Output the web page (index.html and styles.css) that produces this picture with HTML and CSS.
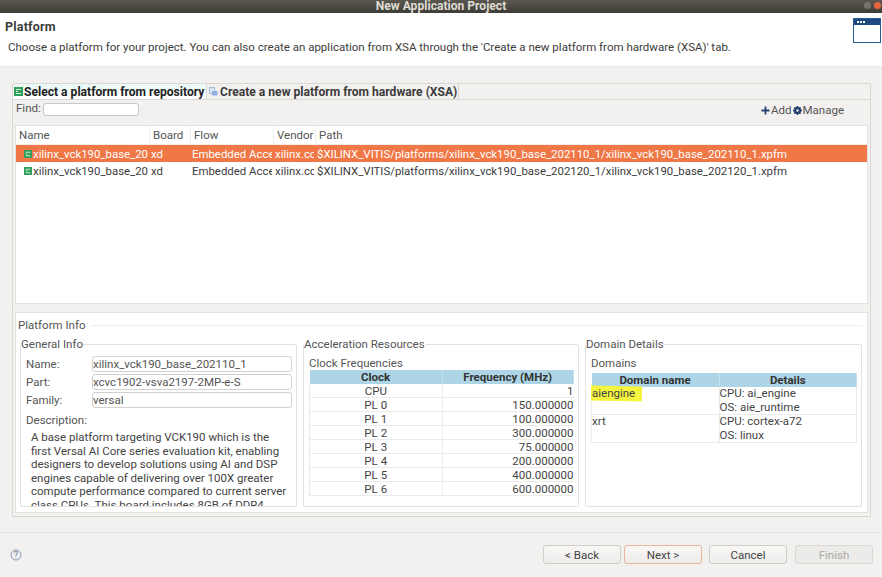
FILE: index.html
```html
<!DOCTYPE html>
<html lang="en">

<head>
    <meta charset="UTF-8">
    <title>New Application Project</title>
    <link rel="stylesheet" href="styles.css">
</head>

<body>
    <div class="titlebar">
        <span class="title">New Application Project</span>
        <span class="win-btns"><i class="win-max"></i><i class="win-close"></i></span>
    </div>

    <div class="banner">
        <div>
            <div class="banner-head">Platform</div>
            <div class="banner-text">Choose a platform for your project. You can also create an application from XSA through the 'Create a new platform from hardware (XSA)' tab.</div>
        </div>
        <div class="banner-icon"><i></i></div>
    </div>

    <div class="main">
        <div class="folder">
            <div class="tabs">
                <div class="tab active">
                    <svg class="chip" viewBox="0 0 9 9"><rect width="9" height="9" fill="#2f9e58"/><path d="M2 2.500h5M2 4.500h2M2 6.500h5" stroke="#d8f3e0" stroke-width="1"/></svg>
                    Select a platform from repository
                </div>
                <div class="tab">
                    <svg class="chip" viewBox="0 0 9 9"><rect x="0.500" y="0.500" width="5" height="6" fill="#dfe8f6" stroke="#a9bcdc"/><rect x="3" y="4" width="5.500" height="4.500" fill="#8fb0e0"/></svg>
                    Create a new platform from hardware (XSA)
                </div>
            </div>

            <div class="toolbar">
                <div class="find">
                    <label>Find:</label>
                    <input class="find-input" type="text">
                </div>
                <div class="actions">
                    <span class="action"><svg class="act-icon" viewBox="0 0 10 10"><path d="M5 0.500v9M0.500 5h9" stroke="#27406f" stroke-width="2"/></svg>Add</span>
                    <span class="action"><svg class="act-icon" viewBox="0 0 10 10"><circle cx="5" cy="5" r="3" fill="none" stroke="#27406f" stroke-width="2.200"/><path d="M5 0v10M0 5h10M1.500 1.500l7 7M8.500 1.500l-7 7" stroke="#27406f" stroke-width="1.400"/><circle cx="5" cy="5" r="1.300" fill="#f2f1f0"/></svg>Manage</span>
                </div>
            </div>

            <div class="repo">
                <table class="repo-table">
                    <colgroup>
                        <col class="c-name"><col class="c-board"><col class="c-flow"><col class="c-vendor"><col>
                    </colgroup>
                    <thead>
                        <tr><th>Name</th><th>Board</th><th>Flow</th><th>Vendor</th><th>Path</th></tr>
                    </thead>
                    <tbody>
                        <tr class="selected">
                            <td class="name-cell"><svg class="chip" viewBox="0 0 9 9"><rect width="9" height="9" fill="#2f9e58"/><path d="M2 2.500h5M2 4.500h2M2 6.500h5" stroke="#d8f3e0" stroke-width="1"/></svg>xilinx_vck190_base_20</td>
                            <td>xd</td>
                            <td>Embedded Acce</td>
                            <td>xilinx.co</td>
                            <td>$XILINX_VITIS/platforms/xilinx_vck190_base_202110_1/xilinx_vck190_base_202110_1.xpfm</td>
                        </tr>
                        <tr>
                            <td class="name-cell"><svg class="chip" viewBox="0 0 9 9"><rect width="9" height="9" fill="#2f9e58"/><path d="M2 2.500h5M2 4.500h2M2 6.500h5" stroke="#d8f3e0" stroke-width="1"/></svg>xilinx_vck190_base_20</td>
                            <td>xd</td>
                            <td>Embedded Acce</td>
                            <td>xilinx.co</td>
                            <td>$XILINX_VITIS/platforms/xilinx_vck190_base_202120_1/xilinx_vck190_base_202120_1.xpfm</td>
                        </tr>
                    </tbody>
                </table>
            </div>

            <div class="info">
                <div class="info-head"><span>Platform Info</span><i></i></div>
                <div class="info-cols">
                    <fieldset class="group">
                        <legend>General Info</legend>
                        <div class="form-row"><label>Name:</label><div class="field">xilinx_vck190_base_202110_1</div></div>
                        <div class="form-row"><label>Part:</label><div class="field">xcvc1902-vsva2197-2MP-e-S</div></div>
                        <div class="form-row"><label>Family:</label><div class="field">versal</div></div>
                        <div class="desc-label">Description:</div>
                        <div class="desc">A base platform targeting VCK190 which is the first Versal AI Core series evaluation kit, enabling designers to develop solutions using AI and DSP engines capable of delivering over 100X greater compute performance compared to current server class CPUs. This board includes 8GB of DDR4</div>
                    </fieldset>

                    <fieldset class="group">
                        <legend>Acceleration Resources</legend>
                        <div class="sub-title">Clock Frequencies</div>
                        <table class="data clocks">
                            <thead><tr><th>Clock</th><th>Frequency (MHz)</th></tr></thead>
                            <tbody>
                                <tr><td>CPU</td><td>1</td></tr>
                                <tr><td>PL 0</td><td>150.000000</td></tr>
                                <tr><td>PL 1</td><td>100.000000</td></tr>
                                <tr><td>PL 2</td><td>300.000000</td></tr>
                                <tr><td>PL 3</td><td>75.000000</td></tr>
                                <tr><td>PL 4</td><td>200.000000</td></tr>
                                <tr><td>PL 5</td><td>400.000000</td></tr>
                                <tr><td>PL 6</td><td>600.000000</td></tr>
                            </tbody>
                        </table>
                    </fieldset>

                    <fieldset class="group">
                        <legend>Domain Details</legend>
                        <div class="sub-title">Domains</div>
                        <table class="data domains">
                            <thead><tr><th>Domain name</th><th>Details</th></tr></thead>
                            <tbody>
                                <tr><td><span class="marked">aiengine</span></td><td>CPU: ai_engine<br>OS: aie_runtime</td></tr>
                                <tr><td>xrt</td><td>CPU: cortex-a72<br>OS: linux</td></tr>
                            </tbody>
                        </table>
                    </fieldset>
                </div>
            </div>
        </div>
    </div>

    <div class="footer">
        <svg class="help" viewBox="0 0 12 12"><circle cx="6" cy="6" r="5" fill="#eef0f6" stroke="#8b94a8"/><text x="6" y="9" text-anchor="middle">?</text></svg>
        <div class="buttons">
            <button class="btn">&lt; Back</button>
            <button class="btn default">Next &gt;</button>
            <button class="btn gap">Cancel</button>
            <button class="btn gap last" disabled>Finish</button>
        </div>
    </div>
</body>

</html>
```

FILE: styles.css
```css
html, body {
    margin: 0;
    padding: 0;
}

body {
    width: 882px;
    height: 577px;
    overflow: hidden;
    background: #f2f1f0;
    font-family: Roboto, "Noto Sans", sans-serif;
    font-size: 11.500px;
    color: #3c3c3c;
}

.titlebar {
    height: 13px;
    background: linear-gradient(#5a5750, #3f3d38);
    display: flex;
    justify-content: center;
    align-items: center;
    position: relative;
}

.title {
    color: #dfdbd2;
    font-weight: 700;
    font-size: 12.100px;
    line-height: 13px;
}

.win-btns {
    position: absolute;
    right: 1px;
    top: 2px;
    display: flex;
    gap: 3px;
}

.win-btns i {
    width: 7px;
    height: 7px;
    border-radius: 50%;
}

.win-max {
    background: #77746d;
}

.win-close {
    background: #e9643a;
}

.banner {
    height: 53px;
    background: #fff;
    border-bottom: 1px solid #e9e8e6;
    display: flex;
    justify-content: space-between;
}

.banner-head {
    font-weight: 700;
    font-size: 12.500px;
    letter-spacing: 0.200px;
    line-height: 14px;
    margin: 7px 0 0 5px;
}

.banner-text {
    margin: 5px 0 0 8px;
    font-size: 11.530px;
    line-height: 16px;
}

.banner-icon {
    width: 26px;
    height: 23px;
    margin: 5px 1px 0 0;
    border: 1px solid #2b5a94;
    background: #fff;
}

.banner-icon i {
    display: block;
    height: 6px;
    background: #1d4a80;
    position: relative;
}

.banner-icon i::before {
    content: "";
    position: absolute;
    left: 3px;
    top: 2px;
    width: 2px;
    height: 2px;
    background: #fff;
    box-shadow: 3px 0 #fff, 6px 0 #fff;
}

.main {
    padding: 16px 11px 0 12px;
}

.folder {
    height: 434px;
    border: 1px solid #d8d7d4;
    border-radius: 2px 2px 0 0;
    display: flex;
    flex-direction: column;
    padding: 0 2px 3px;
    box-sizing: border-box;
}

.tabs {
    display: flex;
    height: 15px;
    margin: 0 -2px;
    border-bottom: 1px solid #d8d7d4;
}

.tab {
    display: flex;
    align-items: center;
    gap: 2px;
    height: 15px;
    padding: 0 1px 0 2px;
    font-weight: 700;
    font-size: 12.100px;
    white-space: nowrap;
    border-right: 1px solid #d8d7d4;
    color: #3c3c3c;
}

.tab.active {
    color: #222;
    background: linear-gradient(#e8f8f6, #fff);
    width: 194px;
    box-sizing: border-box;
    padding-left: 1px;
    gap: 1px;
}

.chip {
    width: 9px;
    height: 9px;
    flex: none;
}

.toolbar {
    height: 25px;
    display: flex;
    justify-content: space-between;
}

.find {
    display: flex;
    align-items: flex-start;
    gap: 2px;
    line-height: 16px;
    margin-left: 1px;
    color: #555;
}

.find-input {
    width: 94px;
    height: 11px;
    padding: 0;
    margin: 3px 0 0 0;
    border: 1px solid #c9c7c3;
    border-radius: 3px;
    background: #fff;
    outline: none;
}

.actions {
    display: flex;
    gap: 1px;
    padding: 2px 24px 0 0;
    line-height: 16px;
    color: #555;
}

.action {
    display: flex;
    align-items: center;
    height: 16px;
}

.act-icon {
    width: 9px;
    height: 9px;
    margin-right: 1px;
}

.repo {
    height: 179px;
    background: #fff;
    border: 1px solid #e2e1df;
    box-sizing: border-box;
}

.repo-table {
    width: 100%;
    border-collapse: separate;
    border-spacing: 0;
    table-layout: fixed;
}

.c-name {
    width: 134px;
}

.c-board {
    width: 41px;
}

.c-flow {
    width: 83px;
}

.c-vendor {
    width: 42px;
}

.repo-table th {
    height: 19px;
    padding: 0 0 0 3px;
    font-weight: 400;
    text-align: left;
    color: #555;
    border-right: 1px solid #f0efed;
    border-bottom: 1px solid #eeedeb;
    box-sizing: border-box;
}

.repo-table th:last-child {
    border-right: 0;
}

.repo-table td {
    height: 17px;
    padding: 0 0 0 1px;
    box-sizing: border-box;
    font-size: 11.400px;
    line-height: 16px;
    overflow: hidden;
    white-space: nowrap;
    border-right: 2px solid transparent;
    color: #3c3c3c;
}

.repo-table td.name-cell {
    padding-left: 8px;
}

.name-cell .chip {
    width: 8px;
    height: 8px;
    margin-right: 1px;
}

.repo-table tr.selected td {
    background: #f07746;
    color: #fff;
}

.info {
    margin-top: 8px;
    height: 201px;
    background: #fff;
    border: 1px solid #e2e1df;
    box-sizing: border-box;
    padding: 5px 5px 0 4px;
}

.info-head {
    display: flex;
    align-items: center;
    gap: 5px;
    line-height: 14px;
    color: #555;
    margin-left: -2px;
}

.info-head i {
    flex: 1;
    height: 1px;
    background: #eeedeb;
}

.info-cols {
    display: grid;
    grid-template-columns: 277px 276px 277px;
    column-gap: 6px;
    margin-top: 5px;
}

.group {
    margin: 0;
    padding: 0 4px 0 5px;
    height: 170px;
    min-width: 0;
    box-sizing: border-box;
    border: 1px solid #e2e1df;
    border-radius: 2px;
    overflow: hidden;
}

.group legend {
    padding: 0;
    margin-left: -5px;
    line-height: 14px;
    color: #555;
}

.form-row {
    display: flex;
    height: 18px;
    align-items: center;
}

.form-row:first-of-type {
    margin-top: 4px;
}

.form-row label {
    width: 66px;
    color: #555;
}

.field {
    flex: 1;
    height: 14px;
    line-height: 15px;
    border: 1px solid #d3d1cd;
    border-radius: 3px;
    color: #555;
}

.desc-label {
    margin: 3px 0 0 0;
    line-height: 16px;
    color: #555;
}

.desc {
    margin: 3px 0 0 5px;
    width: 258px;
    line-height: 13.500px;
    color: #444;
}

.sub-title {
    line-height: 14px;
    margin-top: 5px;
    color: #555;
}

.data {
    width: 100%;
    border-collapse: collapse;
    table-layout: fixed;
}

.data th {
    background: #add5e5;
    font-weight: 700;
    color: #333;
    height: 14px;
    padding: 0;
    line-height: 13px;
    border-right: 1px solid #c3dfe9;
}

.data td {
    padding: 1px 0 0;
    line-height: 12px;
    border: 1px solid #ecebe9;
    border-top: 0;
    color: #444;
}

.clocks th:first-child {
    width: 132px;
}

.clocks td:first-child {
    text-align: center;
}

.clocks td:last-child {
    text-align: right;
    border-right: 0;
}

.domains {
    margin-top: 3px;
}

.domains th:first-child {
    width: 127px;
}

.domains td {
    vertical-align: top;
    padding-top: 0;
    line-height: 13.500px;
}

.marked {
    position: relative;
    display: inline-block;
    z-index: 0;
}

.marked::before {
    content: "";
    position: absolute;
    z-index: -1;
    left: -1px;
    right: -7px;
    top: -1px;
    bottom: 0;
    background: #f4f53c;
    transform: rotate(1deg);
}

.footer {
    margin-top: 15px;
    height: 45px;
    border-top: 1px solid #e6e5e3;
    display: flex;
    justify-content: space-between;
    box-sizing: border-box;
    padding: 12px 9px 0 10px;
}

.help {
    width: 12px;
    height: 12px;
    margin-top: 4px;
}

.help text {
    font-size: 9px;
    fill: #6a7388;
}

.buttons {
    display: flex;
}

.btn {
    width: 78px;
    height: 19px;
    padding: 0;
    margin-left: 3px;
    font-family: inherit;
    font-size: 11.500px;
    color: #444;
    background: linear-gradient(#f8f7f6, #eeedeb);
    border: 1px solid #cfcdc9;
    border-radius: 3px;
}

.btn.gap {
    margin-left: 7px;
}

.btn.last {
    margin-left: 8px;
}

.btn.default {
    border-color: #eab59c;
}

.btn:disabled {
    color: #a9a8a5;
    background: #ecebe9;
    border-color: #d9d8d5;
}
```
